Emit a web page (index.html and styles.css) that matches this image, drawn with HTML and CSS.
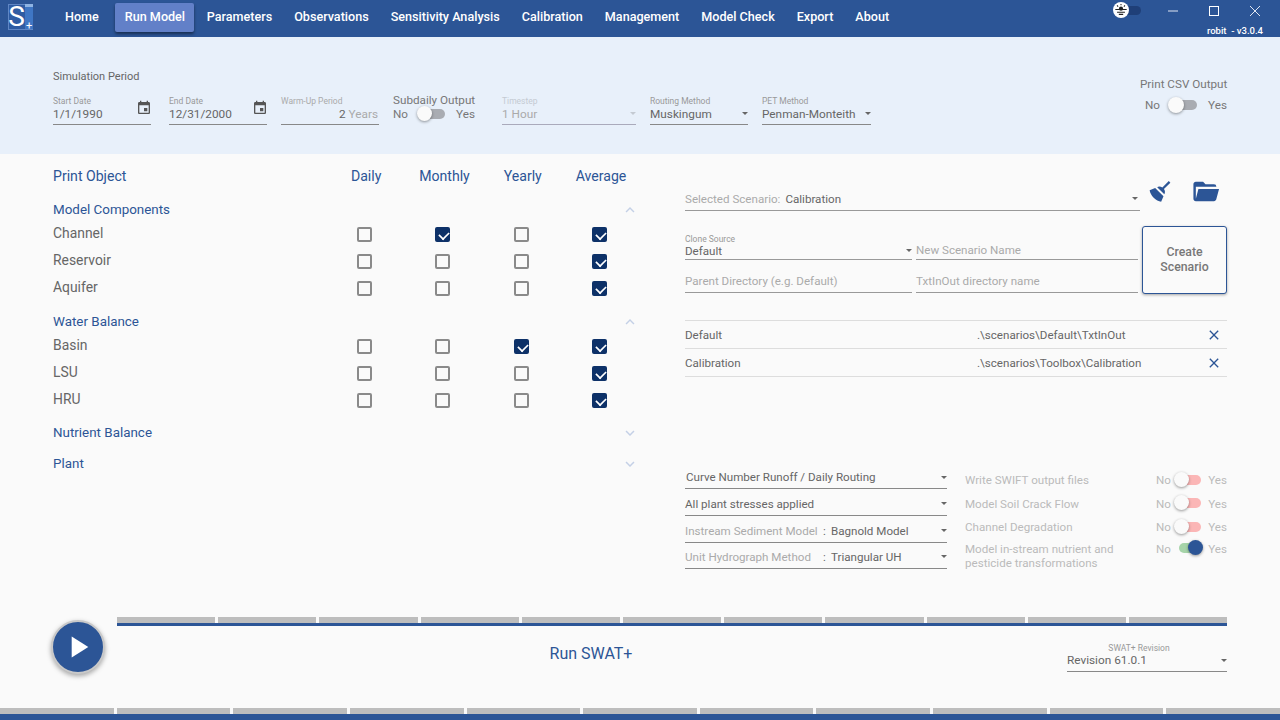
FILE: index.html
```html
<!DOCTYPE html>
<html lang="en">
<head>
<meta charset="utf-8">
<title>SWAT+ Toolbox</title>
<link rel="stylesheet" href="styles.css">
</head>
<body>
<div class="app">
  <header class="topbar">
    <div class="logo"><span class="logo-s">S</span><span class="logo-plus">+</span></div>
    <nav class="nav">
      <a class="nav-item">Home</a>
      <a class="nav-item active">Run Model</a>
      <a class="nav-item">Parameters</a>
      <a class="nav-item">Observations</a>
      <a class="nav-item">Sensitivity Analysis</a>
      <a class="nav-item">Calibration</a>
      <a class="nav-item">Management</a>
      <a class="nav-item">Model Check</a>
      <a class="nav-item">Export</a>
      <a class="nav-item">About</a>
    </nav>
    <div class="win">
      <div class="win-row">
        <div class="theme"><span class="theme-knob"><svg viewBox="0 0 16 16" width="14" height="14"><circle cx="8" cy="6.5" r="2.4" fill="#222"/><path d="M1.5 7.5h13M3.5 10.5h9M5.5 13h5M8 1v1.6M3.5 2.8l1.2 1.4M12.5 2.8l-1.2 1.4" stroke="#222" stroke-width="1.2" fill="none"/></svg></span></div>
        <svg class="win-icon min" viewBox="0 0 12 12" width="12" height="12"><path d="M1 6h10" stroke="#dfe6f2" stroke-width="1"/></svg>
        <svg class="win-icon max" viewBox="0 0 12 12" width="12" height="12"><rect x="1.5" y="1.5" width="9" height="9" fill="none" stroke="#fff" stroke-width="1"/></svg>
        <svg class="win-icon cls" viewBox="0 0 12 12" width="12" height="12"><path d="M1 1l10 10M11 1L1 11" stroke="#dfe6f2" stroke-width="1"/></svg>
      </div>
      <div class="version">robit &nbsp;- v3.0.4</div>
    </div>
  </header>

  <section class="band">
    <div class="band-left">
      <div class="band-title">Simulation Period</div>
      <div class="band-fields">
        <div class="field w98 mr18"><label class="fl">Start Date</label><div class="fv">1/1/1990<svg class="cal" viewBox="0 0 24 24"><path d="M17 12h-5v5h5v-5zM16 1v2H8V1H6v2H5c-1.11 0-1.99.9-1.99 2L3 19c0 1.1.89 2 2 2h14c1.1 0 2-.9 2-2V5c0-1.1-.9-2-2-2h-1V1h-2zm3 18H5V8h14v11z"/></svg></div></div>
        <div class="field w98 mr14"><label class="fl">End Date</label><div class="fv">12/31/2000<svg class="cal" viewBox="0 0 24 24"><path d="M17 12h-5v5h5v-5zM16 1v2H8V1H6v2H5c-1.11 0-1.99.9-1.99 2L3 19c0 1.1.89 2 2 2h14c1.1 0 2-.9 2-2V5c0-1.1-.9-2-2-2h-1V1h-2zm3 18H5V8h14v11z"/></svg></div></div>
        <div class="field w98 mr14"><label class="fl dim">Warm-Up Period</label><div class="fv fv-end"><span>2</span>&nbsp;<span class="dim2">Years</span></div></div>
        <div class="sub">
          <div class="sub-title">Subdaily Output</div>
          <div class="switch-row"><span>No</span><span class="sw grey"><i></i></span><span>Yes</span></div>
        </div>
        <div class="field w134 ml27 mr14 disabled"><label class="fl">Timestep</label><div class="fv sel">1 Hour<b class="caret"></b></div></div>
        <div class="field w98 mr14"><label class="fl">Routing Method</label><div class="fv sel">Muskingum<b class="caret"></b></div></div>
        <div class="field w109"><label class="fl">PET Method</label><div class="fv sel">Penman-Monteith<b class="caret"></b></div></div>
      </div>
    </div>
    <div class="csv">
      <div class="csv-title">Print CSV Output</div>
      <div class="switch-row csv-row"><span>No</span><span class="sw grey"><i></i></span><span>Yes</span></div>
    </div>
  </section>

  <main class="main">
    <section class="left">
      <div class="grid head"><div class="h-first">Print Object</div><div>Daily</div><div>Monthly</div><div>Yearly</div><div>Average</div></div>

      <div class="sec-head s1">Model Components<svg class="chev" viewBox="0 0 24 24"><path d="M7.41 15.41L12 10.83l4.59 4.58L18 14l-6-6-6 6z"/></svg></div>
      <div class="grid row"><div class="name">Channel</div><span class="cb"></span><span class="cb on"></span><span class="cb"></span><span class="cb on"></span></div>
      <div class="grid row"><div class="name">Reservoir</div><span class="cb"></span><span class="cb"></span><span class="cb"></span><span class="cb on"></span></div>
      <div class="grid row"><div class="name">Aquifer</div><span class="cb"></span><span class="cb"></span><span class="cb"></span><span class="cb on"></span></div>

      <div class="sec-head s2">Water Balance<svg class="chev" viewBox="0 0 24 24"><path d="M7.41 15.41L12 10.83l4.59 4.58L18 14l-6-6-6 6z"/></svg></div>
      <div class="grid row"><div class="name">Basin</div><span class="cb"></span><span class="cb"></span><span class="cb on"></span><span class="cb on"></span></div>
      <div class="grid row"><div class="name">LSU</div><span class="cb"></span><span class="cb"></span><span class="cb"></span><span class="cb on"></span></div>
      <div class="grid row"><div class="name">HRU</div><span class="cb"></span><span class="cb"></span><span class="cb"></span><span class="cb on"></span></div>

      <div class="sec-head s3">Nutrient Balance<svg class="chev" viewBox="0 0 24 24"><path d="M7.41 8.59L12 13.17l4.59-4.58L18 10l-6 6-6-6z"/></svg></div>
      <div class="sec-head s4">Plant<svg class="chev" viewBox="0 0 24 24"><path d="M7.41 8.59L12 13.17l4.59-4.58L18 10l-6 6-6-6z"/></svg></div>
    </section>

    <section class="right">
      <div class="scen-row">
        <div class="scen-sel"><span class="dim3">Selected Scenario:</span><span class="scen-val">Calibration</span><b class="caret"></b></div>
        <svg class="broom" viewBox="0 0 24 24"><path d="M19.36,2.72L20.78,4.14L15.06,9.85C16.13,11.39 16.28,13.24 15.38,14.44L9.06,8.12C10.26,7.22 12.11,7.37 13.65,8.44L19.36,2.72M5.93,17.57C3.92,15.56 2.69,13.16 2.35,10.92L7.23,8.83L14.67,16.27L12.58,21.15C10.34,20.81 7.94,19.58 5.93,17.57Z"/></svg>
        <svg class="folder" viewBox="0 0 24 24"><path d="M19,20H4C2.89,20 2,19.1 2,18V6C2,4.89 2.89,4 4,4H10L12,6H19A2,2 0 0,1 21,8H21L4,8V18L6.14,10H23.21L20.93,18.5C20.7,19.37 19.92,20 19,20Z"/></svg>
      </div>

      <div class="create">
        <div class="create-form">
          <div class="cf clone"><label class="fl">Clone Source</label><div class="cf-v">Default<b class="caret"></b></div></div>
          <div class="cf ph-top"><div class="cf-ph">New Scenario Name</div></div>
          <div class="cf ph-bot"><div class="cf-ph">Parent Directory (e.g. Default)</div></div>
          <div class="cf ph-bot"><div class="cf-ph">TxtInOut directory name</div></div>
        </div>
        <button class="create-btn">Create<br>Scenario</button>
      </div>

      <div class="list">
        <div class="list-row"><span class="li-name">Default</span><span class="li-path">.\scenarios\Default\TxtInOut</span><svg class="x" viewBox="0 0 24 24"><path d="M19 6.41L17.59 5 12 10.59 6.41 5 5 6.41 10.59 12 5 17.59 6.41 19 12 13.41 17.59 19 19 17.59 13.41 12z"/></svg></div>
        <div class="list-row"><span class="li-name">Calibration</span><span class="li-path">.\scenarios\Toolbox\Calibration</span><svg class="x" viewBox="0 0 24 24"><path d="M19 6.41L17.59 5 12 10.59 6.41 5 5 6.41 10.59 12 5 17.59 6.41 19 12 13.41 17.59 19 19 17.59 13.41 12z"/></svg></div>
      </div>

      <div class="opts">
        <div class="opts-left">
          <div class="opt">Curve Number Runoff / Daily Routing<b class="caret"></b></div>
          <div class="opt">All plant stresses applied<b class="caret"></b></div>
          <div class="opt"><span class="dim3 o-lab">Instream Sediment Model</span><span class="o-colon">:</span>Bagnold Model<b class="caret"></b></div>
          <div class="opt"><span class="dim3 o-lab">Unit Hydrograph Method</span><span class="o-colon">:</span>Triangular UH<b class="caret"></b></div>
        </div>
        <div class="opts-right">
          <div class="t-row"><span class="t-lab">Write SWIFT output files</span><span class="t-sw"><span>No</span><span class="sw red"><i></i></span><span>Yes</span></span></div>
          <div class="t-row"><span class="t-lab">Model Soil Crack Flow</span><span class="t-sw"><span>No</span><span class="sw red"><i></i></span><span>Yes</span></span></div>
          <div class="t-row"><span class="t-lab">Channel Degradation</span><span class="t-sw"><span>No</span><span class="sw red"><i></i></span><span>Yes</span></span></div>
          <div class="t-row tall"><span class="t-lab">Model in-stream nutrient and pesticide transformations</span><span class="t-sw"><span>No</span><span class="sw green"><i></i></span><span>Yes</span></span></div>
        </div>
      </div>
    </section>
  </main>

  <section class="run">
    <div class="run-play"><button class="play"><svg viewBox="0 0 24 24" width="24" height="24"><path d="M5.7 1.5L22.3 12 5.7 22.5z" fill="#fff"/></svg></button></div>
    <div class="run-body">
      <div class="segs small"><i></i><i></i><i></i><i></i><i></i><i></i><i></i><i></i><i></i><i></i><i></i></div>
      <div class="run-line"></div>
      <div class="run-bottom">
        <div class="run-label">Run SWAT+</div>
        <div class="rev"><label class="fl center">SWAT+ Revision</label><div class="fv sel">Revision 61.0.1<b class="caret"></b></div></div>
      </div>
    </div>
  </section>

  <footer class="foot">
    <div class="segs"><i></i><i></i><i></i><i></i><i></i><i></i><i></i><i></i><i></i><i></i><i></i></div>
    <div class="foot-line"></div>
  </footer>
</div>
</body>
</html>
```

FILE: styles.css
```css
* { box-sizing: border-box; }
html, body { margin: 0; padding: 0; }
body { width: 1280px; height: 720px; overflow: hidden; font-family: Roboto, "Liberation Sans", sans-serif; background: #fafafa; color: #666; }
.app { width: 1280px; height: 720px; display: flex; flex-direction: column; }

/* top bar */
.topbar { height: 37px; flex: none; background: #2c5596; display: flex; color: #fff; }
.logo { width: 25px; height: 26px; margin: 4px 0 0 8px; background: #2f5ca3; position: relative; flex: none; outline: 1px solid #5f86c4; outline-offset: -1px; }
.logo::before { content: ""; position: absolute; right: 0; top: 0; width: 8px; height: 22px; background: #3f76c4; border-top: 3px solid #8fb4e4; }
.logo-s { position: absolute; left: 0; top: 0; width: 17px; font-size: 28px; line-height: 25px; color: #fff; text-align: center; }
.logo-plus { position: absolute; right: 0; bottom: 0; width: 8px; font-size: 11px; line-height: 9px; color: #fff; text-align: center; }
.nav { display: flex; margin-left: 21px; }
.nav-item { height: 29px; margin-top: 3px; padding: 0 11px; font-size: 12.6px; font-weight: 500; line-height: 28px; color: #fff; border-radius: 2px; white-space: nowrap; }
.nav-item:first-child { padding-left: 11px; margin-right: 5px; margin-left: 0; }
.nav-item.active { width: 79px; padding: 0 10px; background: #6280c8; box-shadow: 0 2px 3px rgba(0,0,0,.45); margin-right: 2px; }
.win { margin-left: auto; width: 170px; display: flex; flex-direction: column; }
.win-row { display: flex; align-items: center; height: 22px; }
.theme { width: 21px; height: 9px; margin-left: 10px; margin-top: -2px; background: #1f3f78; border-radius: 5px; position: relative; flex: none; }
.theme-knob { position: absolute; left: -7px; top: -4px; width: 16px; height: 16px; border-radius: 50%; background: #fff; display: flex; align-items: center; justify-content: center; }
.win-icon { display: block; flex: none; }
.min { margin-left: 26px; }
.max { margin-left: 29px; }
.cls { margin-left: 29px; }
.version { font-size: 9.5px; font-weight: 500; text-align: right; padding-right: 17px; margin-top: 3px; line-height: 12px; color: #fff; }

/* simulation band */
.band { height: 117px; flex: none; background: #e8f0fa; display: flex; padding: 34px 53px 0; font-size: 11.7px; }
.band-left { flex: 1; }
.band-title { font-size: 11px; line-height: 13px; color: #666; margin-top: -1px; }
.band-fields { display: flex; margin-top: 13px; }
.field { flex: none; }
.w98 { width: 98px; }
.w109 { width: 109px; }
.w134 { width: 134px; }
.mr18 { margin-right: 18px; }
.mr14 { margin-right: 14px; }
.ml27 { margin-left: 27px; }
.fl { display: block; font-size: 8.5px; line-height: 10px; color: #999; white-space: nowrap; }
.fl.dim { color: #aaa; }
.fl.center { text-align: center; padding-right: 16px; }
.fv { position: relative; display: flex; font-size: 11.8px; line-height: 14px; height: 19px; padding-top: 1px; color: #666; border-bottom: 1px solid #888; white-space: nowrap; }
.fv-end { justify-content: flex-end; padding-right: 1px; }
.dim2 { color: #aaa; }
.cal { position: absolute; right: -1px; top: -6px; width: 16px; height: 16px; fill: #555; }
.caret { position: absolute; right: 3px; top: 50%; margin-top: -2px; width: 0; height: 0; border-left: 3.5px solid transparent; border-right: 3.5px solid transparent; border-top: 3.5px solid #666; }
.fv .caret { top: 6px; margin-top: 0; right: 0; }
.sel { padding-right: 12px; }
.disabled .fl { color: #c4cad2; }
.disabled .fv { color: #aaa; border-bottom-color: #aab; }
.disabled .caret { border-top-color: #c4cad2; }
.sub { width: 82px; flex: none; margin-top: -3px; color: #777; }
.sub-title { line-height: 14px; white-space: nowrap; }
.switch-row { display: flex; align-items: center; justify-content: space-between; line-height: 14px; color: #777; }
.sw { position: relative; display: block; width: 27px; height: 11px; flex: none; }
.sw::before { content: ""; position: absolute; left: 5px; right: 0; top: 0; height: 10px; border-radius: 5px; background: #a9acb2; }
.sw i { position: absolute; left: 0; top: -3px; width: 15px; height: 15px; border-radius: 50%; background: #fafafa; box-shadow: 0 1px 3px rgba(0,0,0,.4); }
.sub .sw { width: 28px; margin: 0 1px 0 -1px; }
.sw.red { margin: 0 2px 0 -2px; }
.sw.red::before { background: #fbb6b6; }
.sw.green::before { background: #a6d4a9; left: 3px; right: 4px; }
.sw.green i { left: auto; right: 0; background: #2c5596; }
.csv { width: 87px; margin-top: 6px; color: #777; }
.csv-title { line-height: 14px; white-space: nowrap; }
.csv-row { margin-top: 7px; padding: 0 0 0 5px; }
.csv-row .sw { width: 29px; margin: 0 2px 0 -2px; }
.csv-row .sw::before { left: 8px; }
.csv-row .sw i { left: 0; width: 16px; height: 16px; }

/* main */
.main { flex: 1; min-height: 0; display: flex; }
.left { width: 585px; margin-left: 53px; flex: none; }
.grid { display: grid; grid-template-columns: 273px repeat(4, 78.3px); align-items: center; justify-items: center; }
.head { height: 18px; margin-top: 13px; font-size: 14.1px; color: #2c5596; }
.h-first { justify-self: start; }
.head div:not(.h-first) { transform: translateX(1px); }
.sec-head { position: relative; font-size: 13.4px; line-height: 18px; height: 18px; color: #2c5596; }
.s1 { margin-top: 16px; }
.s2 { margin-top: 10.5px; }
.s3 { margin-top: 9.5px; }
.s4 { margin-top: 13px; }
.chev { position: absolute; left: 568px; top: 0; width: 18px; height: 18px; fill: #c4d0e6; }
.row { height: 27px; }
.s1 + .row { margin-top: 2px; }
.s2 + .row { margin-top: 2.5px; }
.name { justify-self: start; font-size: 13.9px; color: #666; padding-bottom: 3px; }
.cb { position: relative; display: block; width: 15px; height: 15px; margin-right: 1px; border: 2px solid #8a8a8a; border-radius: 2px; }
.cb.on { background: #0d3168; border-color: #0d3168; }
.cb.on::after { content: ""; position: absolute; left: 3px; top: 0; width: 6px; height: 9px; margin: 0; border: solid #fff; border-width: 0 2px 2px 0; transform: rotate(45deg) scale(.85); }

/* right */
.right { width: 542px; margin-left: 47px; flex: none; font-size: 11.6px; color: #666; }
.scen-row { display: flex; height: 57px; position: relative; }
.scen-sel { position: relative; width: 455px; height: 57px; border-bottom: 1px solid #999; white-space: nowrap; padding-top: 38px; line-height: 14px; }
.dim3 { color: #aaa; }
.scen-val { margin-left: 5px; }
.scen-sel .caret { right: 2px; top: 43px; margin: 0; }
.broom { position: absolute; left: 462px; top: 24px; width: 27px; height: 27px; fill: #2c5596; }
.folder { position: absolute; left: 506px; top: 23px; width: 29px; height: 29px; fill: #2c5596; }
.create { display: flex; margin-top: 15px; }
.create-form { width: 453px; height: 68px; display: grid; grid-template-columns: 227px 222px; column-gap: 4px; row-gap: 0; grid-template-rows: 34px 34px; margin-top: 0; }
.cf { position: relative; border-bottom: 1px solid #999; white-space: nowrap; }
.clone { padding-top: 8px; }
.cf .fl { color: #999; }
.cf-v { line-height: 14px; position: relative; }
.cf-v .caret { top: 5px; margin: 0; right: 0; }
.cf-ph { color: #aaa; line-height: 14px; }
.ph-top { padding-top: 17px; }
.ph-bot { padding-top: 14px; height: 33px; align-self: start; }
.create-btn { width: 85px; height: 68px; margin-left: 4px; background: #fafafa; border: 1px solid #2c5596; border-radius: 3px; box-shadow: 0 1px 3px rgba(0,0,0,.35); font: 500 12.3px/15px Roboto, sans-serif; color: #777; padding: 0; }
.list { margin-top: 26px; border-top: 1px solid #ddd; }
.list-row { height: 28px; display: flex; align-items: center; border-bottom: 1px solid #ddd; position: relative; white-space: nowrap; }
.li-name { width: 292px; }
.x { position: absolute; right: 5px; top: 6px; width: 16px; height: 16px; fill: #2c5596; }
.opts { display: flex; margin-top: 90px; }
.opts-left { width: 262px; flex: none; }
.opt { position: relative; height: 27px; border-bottom: 1px solid #888; padding-top: 8px; line-height: 14px; white-space: nowrap; }
.opt .caret { right: 0; top: 13px; margin: 0; }
.opt:first-child { height: 22px; padding-top: 3px; padding-left: 1px; }
.opt:first-child .caret { top: 9px; }
.opt:last-child { height: 26px; padding-top: 7px; }
.opt:last-child .caret { top: 12px; }
.o-lab { display: inline-block; width: 136px; }
.o-colon { display: inline-block; width: 10px; padding-left: 2px; }
.opts-right { width: 262px; margin-left: 18px; color: #bbb; margin-top: 3px; flex: none; }
.t-row { display: flex; height: 23.5px; line-height: 14px; align-items: flex-start; padding-top: 3px; }
.t-lab { width: 191px; flex: none; }
.t-sw { flex: 1; display: flex; justify-content: space-between; align-items: center; }
.tall { height: 32px; padding-top: 1px; }

/* run */
.run { height: 91px; flex: none; display: flex; }
.run-play { width: 117px; flex: none; padding: 3px 0 0 51px; }
.play { width: 54px; height: 54px; padding: 0; border-radius: 50%; background: #2c5596; border: 2px solid #c9c9c9; box-shadow: 0 2px 5px rgba(0,0,0,.35); display: flex; align-items: center; justify-content: center; }
.run-body { width: 1110px; flex: none; }
.segs { display: flex; gap: 3px; height: 6px; }
.segs i { flex: 1; background: #bdbdbd; }
.run-line { height: 3px; background: #2c5596; }
.run-bottom { display: flex; height: 52px; position: relative; }
.run-label { width: 948px; text-align: center; font-size: 16px; line-height: 20px; color: #2c5596; padding-top: 18px; }
.rev { position: absolute; right: 0; top: 17px; width: 160px; }
.rev .fv { padding-top: 0; }
.foot { height: 12px; flex: none; }
.foot-line { height: 6px; background: #2c5596; }
```
